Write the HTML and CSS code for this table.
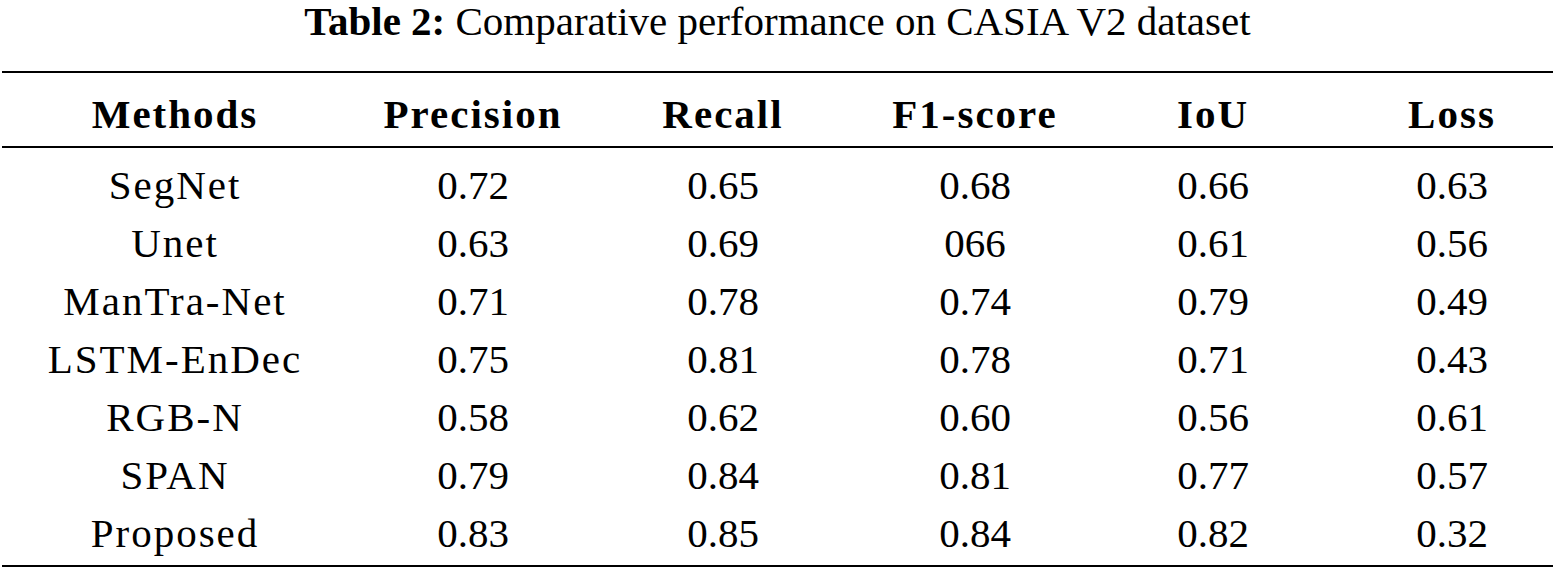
FILE: index.html
```html
<!DOCTYPE html>
<html>
<head>
<meta charset="utf-8">
<link rel="stylesheet" href="styles.css">
</head>
<body>
<div class="page">
  <div class="caption"><b>Table 2:</b> Comparative performance on CASIA V2 dataset</div>
  <table class="results">
    <colgroup>
      <col class="c1"><col class="c2"><col class="c3"><col class="c4"><col class="c5"><col class="c6">
    </colgroup>
    <thead>
      <tr><th>Methods</th><th>Precision</th><th>Recall</th><th>F1-score</th><th>IoU</th><th class="last">Loss</th></tr>
    </thead>
    <tbody>
      <tr class="first"><td class="name">SegNet</td><td>0.72</td><td>0.65</td><td>0.68</td><td>0.66</td><td class="last">0.63</td></tr>
      <tr><td class="name">Unet</td><td>0.63</td><td>0.69</td><td>066</td><td>0.61</td><td class="last">0.56</td></tr>
      <tr><td class="name">ManTra-Net</td><td>0.71</td><td>0.78</td><td>0.74</td><td>0.79</td><td class="last">0.49</td></tr>
      <tr><td class="name">LSTM-EnDec</td><td>0.75</td><td>0.81</td><td>0.78</td><td>0.71</td><td class="last">0.43</td></tr>
      <tr><td class="name">RGB-N</td><td>0.58</td><td>0.62</td><td>0.60</td><td>0.56</td><td class="last">0.61</td></tr>
      <tr><td class="name">SPAN</td><td>0.79</td><td>0.84</td><td>0.81</td><td>0.77</td><td class="last">0.57</td></tr>
      <tr class="final"><td class="name">Proposed</td><td>0.83</td><td>0.85</td><td>0.84</td><td>0.82</td><td class="last">0.32</td></tr>
    </tbody>
  </table>
</div>
</body>
</html>
```
FILE: styles.css
```css
html, body {
  margin: 0;
  padding: 0;
  background: #ffffff;
}
body {
  font-family: "Liberation Serif", "DejaVu Serif", serif;
  color: #000;
}
.page {
  width: 1555px;
}
.caption {
  text-align: center;
  font-size: 41px;
  line-height: 42px;
  height: 42px;
  margin-bottom: 29px;
}
.caption b {
  font-weight: bold;
}
.results {
  margin-left: 2px;
  width: 1551px;
  table-layout: fixed;
  border-collapse: collapse;
  border-top: 2px solid #000;
  border-bottom: 2px solid #000;
}
.c1 { width: 346px; }
.c2 { width: 250px; }
.c3 { width: 250px; }
.c4 { width: 254px; }
.c5 { width: 222px; }
.c6 { width: 229px; }
.results th,
.results td {
  text-align: center;
  padding: 0;
  font-size: 41px;
  line-height: 58px;
  white-space: nowrap;
}
.results th {
  font-weight: bold;
  letter-spacing: 2px;
  padding-top: 12px;
  padding-bottom: 3px;
  border-bottom: 2px solid #000;
}
.results td.name {
  letter-spacing: 2px;
}
.results .last {
  padding-left: 27px;
}
.results tr.first td {
  padding-top: 8px;
}
.results tr.final td {
  padding-bottom: 3px;
}
```
